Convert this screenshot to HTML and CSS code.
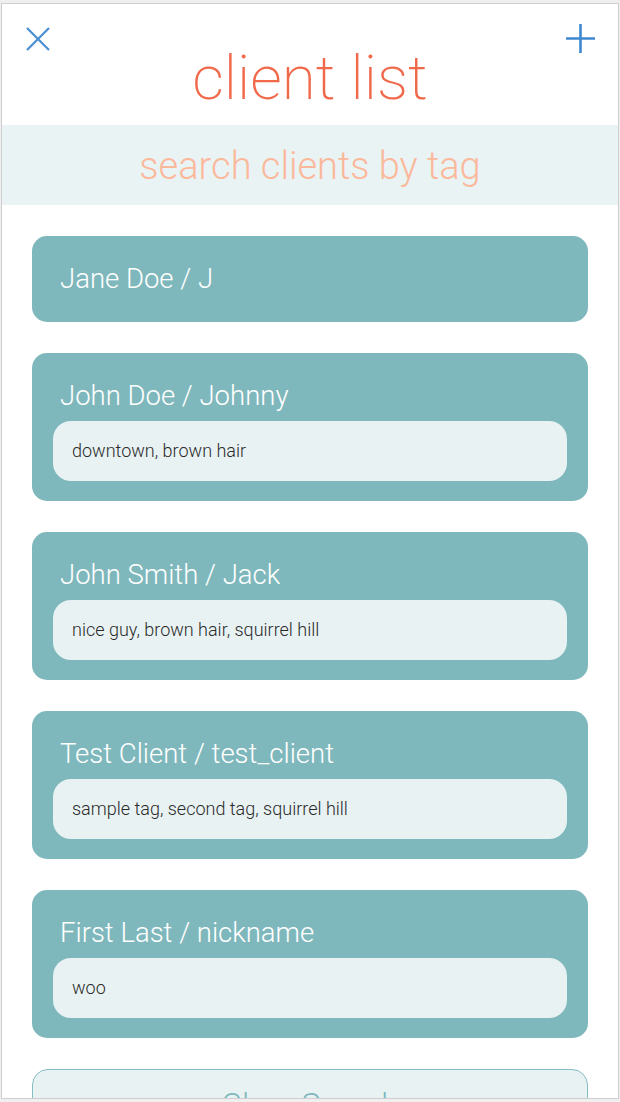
FILE: index.html
```html
<!DOCTYPE html>
<html>
<head>
<meta charset="utf-8">
<link rel="stylesheet" href="styles.css">
</head>
<body>
<div class="frame">
  <header class="header">
    <div class="icon-left">
      <svg width="24" height="24" viewBox="0 0 24 24"><path d="M1 1 L23 23 M23 1 L1 23" stroke="#4a8fd1" stroke-width="2.2" stroke-linecap="butt" fill="none"/></svg>
    </div>
    <h1 class="title">client list</h1>
    <div class="icon-right">
      <svg width="31" height="31" viewBox="0 0 31 31"><path d="M15.5 1 V30 M1 15.5 H30" stroke="#3f88cf" stroke-width="2.6" fill="none"/></svg>
    </div>
  </header>
  <div class="search">search clients by tag</div>
  <div class="list">
    <div class="card plain"><div class="name">Jane Doe / J</div></div>
    <div class="card"><div class="name">John Doe / Johnny</div><div class="tags">downtown, brown hair</div></div>
    <div class="card"><div class="name">John Smith / Jack</div><div class="tags">nice guy, brown hair, squirrel hill</div></div>
    <div class="card"><div class="name">Test Client / test_client</div><div class="tags">sample tag, second tag, squirrel hill</div></div>
    <div class="card"><div class="name">First Last / nickname</div><div class="tags">woo</div></div>
    <div class="clear">Clear Search</div>
  </div>
</div>
</body>
</html>
```

FILE: styles.css
```css
html, body {
  margin: 0;
  padding: 0;
}
body {
  background: #efefef;
  font-family: Roboto, "Liberation Sans", sans-serif;
  font-weight: 300;
}
.frame {
  margin: 3px 0 0 1px;
  width: 616px;
  height: 1094px;
  border: 1px solid #cfcfcf;
  background: #ffffff;
  overflow: hidden;
}
.header {
  display: grid;
  grid-template-columns: 60px 1fr 60px;
  height: 121px;
}
.icon-left {
  padding: 23px 0 0 24px;
}
.icon-right {
  padding: 19px 0 0 7px;
}
.icon-left svg, .icon-right svg {
  display: block;
}
.title {
  margin: 0;
  padding-top: 34px;
  text-align: center;
  font-weight: 200;
  font-size: 62px;
  line-height: 80px;
  color: #f0694b;
  height: 121px;
  box-sizing: border-box;
}
.search {
  height: 80px;
  box-sizing: border-box;
  padding-top: 2px;
  background: #e9f3f4;
  text-align: center;
  font-size: 38px;
  line-height: 78px;
  color: #fbb89b;
}
.list {
  display: flex;
  flex-direction: column;
  gap: 31px;
  padding: 31px 30px 0 30px;
}
.card {
  background: #7fb8bc;
  border-radius: 15px;
  padding: 25px 21px 20px;
}
.card.plain {
  padding-bottom: 25px;
}
.name {
  color: #ffffff;
  font-size: 27.5px;
  line-height: 36px;
  padding-left: 7px;
}
.tags {
  margin-top: 7px;
  height: 60px;
  border-radius: 18px;
  background: #e8f2f3;
  color: #2a2a2a;
  font-size: 18px;
  line-height: 60px;
  padding-left: 19px;
}
.clear {
  height: 80px;
  border: 1px solid #86bdc2;
  border-radius: 16px;
  background: #e8f2f3;
  color: #7fb8bc;
  text-align: center;
  font-size: 32px;
  line-height: 68px;
}
```
